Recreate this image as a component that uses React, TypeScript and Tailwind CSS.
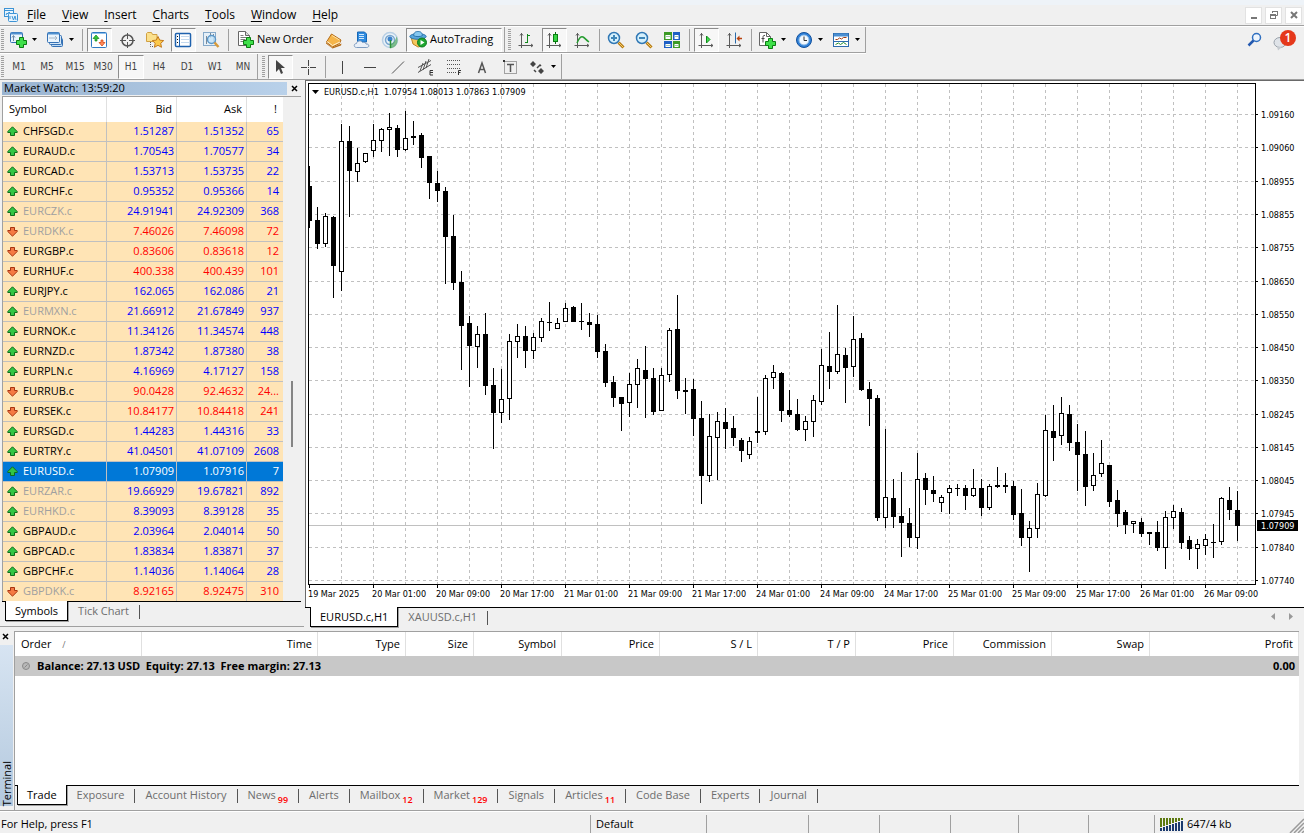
import { useState, type ReactNode } from "react";
import clsx from "clsx";

type Quote = { symbol: string; bid: string; ask: string; spread: string; up: boolean; muted?: boolean };

const q = (symbol: string, bid: string, ask: string, spread: string, up = true, muted = false): Quote => ({
  symbol, bid, ask, spread, up, muted,
});

const quotes: Quote[] = [
  q("CHFSGD.c", "1.51287", "1.51352", "65"),
  q("EURAUD.c", "1.70543", "1.70577", "34"),
  q("EURCAD.c", "1.53713", "1.53735", "22"),
  q("EURCHF.c", "0.95352", "0.95366", "14"),
  q("EURCZK.c", "24.91941", "24.92309", "368", true, true),
  q("EURDKK.c", "7.46026", "7.46098", "72", false, true),
  q("EURGBP.c", "0.83606", "0.83618", "12", false),
  q("EURHUF.c", "400.338", "400.439", "101", false),
  q("EURJPY.c", "162.065", "162.086", "21"),
  q("EURMXN.c", "21.66912", "21.67849", "937", true, true),
  q("EURNOK.c", "11.34126", "11.34574", "448"),
  q("EURNZD.c", "1.87342", "1.87380", "38"),
  q("EURPLN.c", "4.16969", "4.17127", "158"),
  q("EURRUB.c", "90.0428", "92.4632", "24...", false),
  q("EURSEK.c", "10.84177", "10.84418", "241", false),
  q("EURSGD.c", "1.44283", "1.44316", "33"),
  q("EURTRY.c", "41.04501", "41.07109", "2608"),
  q("EURUSD.c", "1.07909", "1.07916", "7"),
  q("EURZAR.c", "19.66929", "19.67821", "892", true, true),
  q("EURHKD.c", "8.39093", "8.39128", "35", true, true),
  q("GBPAUD.c", "2.03964", "2.04014", "50"),
  q("GBPCAD.c", "1.83834", "1.83871", "37"),
  q("GBPCHF.c", "1.14036", "1.14064", "28"),
  q("GBPDKK.c", "8.92165", "8.92475", "310", false, true),
];

// high, body top, body bottom, low, 1 = bearish
const candles: number[][] = [
  [166, 186, 221, 228, 1], [207, 220, 244, 249, 1], [213, 216, 244, 247, 0], [216, 217, 266, 298, 1],
  [124, 141, 272, 291, 0], [126, 141, 171, 217, 1], [148, 163, 172, 182, 0], [153, 153, 162, 163, 0],
  [124, 140, 151, 157, 0], [128, 129, 141, 152, 0], [113, 127, 130, 156, 0], [125, 128, 150, 157, 1],
  [111, 138, 150, 151, 0], [121, 136, 138, 145, 1], [133, 135, 158, 168, 1], [156, 156, 183, 199, 1],
  [171, 183, 191, 202, 1], [187, 191, 237, 284, 1], [215, 236, 283, 290, 1], [271, 282, 326, 370, 1],
  [316, 323, 346, 387, 1], [326, 334, 347, 368, 0], [313, 334, 386, 395, 1], [368, 385, 413, 449, 1],
  [369, 399, 413, 423, 0], [334, 341, 399, 420, 0], [324, 336, 342, 358, 0], [326, 336, 351, 368, 1],
  [333, 337, 351, 359, 0], [318, 321, 338, 342, 0], [302, 322, 323, 331, 1], [318, 323, 329, 329, 0],
  [303, 308, 322, 322, 0], [306, 307, 322, 322, 1], [303, 321, 322, 330, 1], [313, 322, 325, 337, 1],
  [315, 324, 352, 358, 1], [344, 351, 383, 387, 1], [376, 382, 398, 407, 1], [397, 397, 404, 431, 1],
  [373, 384, 403, 417, 0], [359, 368, 385, 408, 0], [346, 370, 379, 418, 1], [368, 378, 412, 415, 1],
  [368, 375, 411, 411, 0], [328, 330, 375, 382, 0], [295, 329, 391, 399, 1], [378, 390, 392, 414, 1],
  [379, 389, 419, 436, 1], [401, 418, 476, 504, 1], [414, 436, 476, 482, 0], [412, 421, 438, 480, 0],
  [408, 422, 429, 449, 1], [416, 428, 438, 446, 1], [438, 440, 451, 462, 1], [437, 441, 455, 459, 0],
  [397, 431, 433, 443, 1], [375, 378, 432, 435, 0], [365, 372, 378, 389, 0], [372, 373, 411, 422, 1],
  [390, 410, 415, 417, 1], [399, 414, 430, 431, 1], [416, 421, 430, 441, 0], [395, 400, 422, 437, 0],
  [349, 365, 402, 405, 0], [332, 366, 372, 389, 1], [305, 354, 372, 374, 0], [348, 355, 368, 403, 1],
  [316, 339, 367, 377, 0], [333, 338, 390, 391, 1], [382, 389, 399, 426, 1], [395, 398, 518, 521, 1],
  [429, 497, 518, 528, 0], [479, 498, 517, 528, 1], [472, 516, 523, 557, 1], [508, 523, 538, 547, 1],
  [453, 479, 538, 549, 0], [473, 478, 490, 505, 1], [476, 490, 494, 502, 1], [495, 497, 503, 512, 0],
  [485, 488, 493, 514, 0], [484, 488, 489, 496, 1], [485, 488, 496, 510, 1], [469, 488, 496, 497, 0],
  [479, 488, 508, 516, 1], [484, 486, 508, 510, 0], [467, 485, 487, 488, 1], [473, 485, 487, 493, 1],
  [481, 486, 515, 520, 1], [489, 513, 538, 546, 1], [521, 528, 538, 572, 0], [483, 494, 529, 538, 0],
  [415, 430, 496, 497, 0], [405, 431, 438, 461, 1], [397, 413, 436, 445, 0], [405, 414, 443, 451, 1],
  [424, 442, 455, 491, 1], [431, 454, 487, 506, 1], [453, 475, 486, 491, 0], [440, 463, 474, 477, 0],
  [465, 465, 502, 507, 1], [490, 500, 514, 527, 1], [510, 512, 525, 534, 1], [521, 521, 524, 533, 0],
  [518, 522, 534, 537, 1], [532, 532, 534, 545, 1], [521, 532, 548, 551, 1], [511, 517, 548, 569, 0],
  [505, 511, 518, 529, 0], [508, 512, 543, 549, 1], [536, 540, 549, 560, 1], [539, 544, 549, 569, 0],
  [534, 539, 546, 555, 0], [524, 542, 543, 558, 1], [497, 498, 542, 545, 0], [487, 500, 510, 520, 1],
  [491, 510, 526, 541, 1],
];

const PLOT_TOP = 84;

const prices: [string, number][] = [
  ["1.09160", 114], ["1.09060", 147], ["1.08955", 181], ["1.08855", 214], ["1.08755", 247],
  ["1.08650", 281], ["1.08550", 314], ["1.08450", 347], ["1.08350", 380], ["1.08245", 414],
  ["1.08145", 447], ["1.08045", 480], ["1.07945", 513], ["1.07840", 547], ["1.07740", 580],
];

const times = [
  "19 Mar 2025", "20 Mar 01:00", "20 Mar 09:00", "20 Mar 17:00", "21 Mar 01:00", "21 Mar 09:00",
  "21 Mar 17:00", "24 Mar 01:00", "24 Mar 09:00", "24 Mar 17:00", "25 Mar 01:00", "25 Mar 09:00",
  "25 Mar 17:00", "26 Mar 01:00", "26 Mar 09:00",
];

const terminalTabs: { name: string; count?: string }[] = [
  { name: "Trade" }, { name: "Exposure" }, { name: "Account History" }, { name: "News", count: "99" },
  { name: "Alerts" }, { name: "Mailbox", count: "12" }, { name: "Market", count: "129" },
  { name: "Signals" }, { name: "Articles", count: "11" }, { name: "Code Base" }, { name: "Experts" },
  { name: "Journal" },
];

const orderColumns: [string, string][] = [
  ["Time", "w-[176px]"], ["Type", "w-[88px]"], ["Size", "w-[68px]"], ["Symbol", "w-[88px]"],
  ["Price", "w-[98px]"], ["S / L", "w-[98px]"], ["T / P", "w-[98px]"], ["Price", "w-[98px]"],
  ["Commission", "w-[98px]"], ["Swap", "w-[98px]"], ["Profit", ""],
];

/* ── Icons ── */

function Svg({ children, size = 18 }: { children: ReactNode; size?: number }) {
  return (
    <svg width={size} height={size} viewBox={`0 0 ${size} ${size}`} fill="none" className="shrink-0" aria-hidden="true">
      {children}
    </svg>
  );
}

const Plus = ({ x, y }: { x: number; y: number }) => (
  <path
    transform={`translate(${x} ${y})`}
    d="M3.5.5h4v3h3v4h-3v3h-4v-3h-3v-4h3z"
    fill="#3fe04a"
    stroke="#0b7d12"
  />
);

const AppIcon = () => (
  <Svg size={16}>
    <rect x="1.5" y="1.5" width="9" height="8" fill="#e8f4fd" stroke="#3d94d6" />
    <path d="M2 3.5h8" stroke="#3d94d6" />
    <path d="M3 8l1-2 1 1 1-2 2 2" stroke="#3d94d6" />
    <rect x="5.5" y="6.5" width="9" height="8" rx="1" fill="#e8f4fd" stroke="#3d94d6" />
    <path d="M7 12v-3M9 9l1.5 4L12 9l1 4" stroke="#3d94d6" />
  </Svg>
);

const NewChartIcon = () => (
  <Svg>
    <rect x="1.5" y="1.5" width="12" height="10" rx="1" fill="#e9f4fd" stroke="#3471b5" />
    <path d="M2 2.5h11" stroke="#4f90cf" strokeWidth="2" />
    <path d="M4.5 10V5M3 6.5l1.5-2 1.5 2" stroke="#6f8aa5" />
    <Plus x={7} y={6} />
  </Svg>
);

const ProfilesIcon = () => (
  <Svg>
    <rect x="5.5" y="7.5" width="11" height="8" rx="1" fill="#bfdaf2" stroke="#3471b5" />
    <rect x="3.5" y="4.5" width="12" height="9" rx="1" fill="#d4e7f7" stroke="#3471b5" />
    <rect x="1.5" y="1.5" width="12" height="10" rx="1" fill="#e9f4fd" stroke="#3471b5" />
    <path d="M2 2.5h11" stroke="#4f90cf" strokeWidth="2" />
    <path d="M3 7h8M9 5l2 2-2 2" stroke="#a5b6c6" />
  </Svg>
);

const MarketWatchIcon = () => (
  <Svg>
    <rect x="1.5" y="1.5" width="15" height="15" rx="1" fill="#fff" stroke="#2f79c3" />
    <path d="M2 2.5h14" stroke="#8fc0ec" />
    <path d="M6 4l3 3.5H7V10H5V7.5H3z" fill="#35c63c" stroke="#15861b" strokeWidth=".7" />
    <path d="M12 15l3-3.500h-2V9h-2v2.500H9z" fill="#ff8c5c" stroke="#d03c0c" strokeWidth=".7" />
  </Svg>
);

const CrosshairIcon = () => (
  <Svg>
    <circle cx="9.5" cy="9.5" r="5.5" stroke="#555" strokeWidth="1.5" />
    <path d="M9.5 2v6M9.5 11v6M2 9.5h6M11 9.5h6" stroke="#555" />
  </Svg>
);

const NavigatorIcon = () => (
  <Svg>
    <path d="M.5 2.5l1-1h4l1 2H11v7H.5z" fill="#fbe08c" stroke="#d0a043" />
    <path d="M4.5 11v4.5h3" stroke="#555" strokeDasharray="1 1" />
    <path d="M12 5.5l1.7 3.6 4 .5-3 2.7.8 4-3.5-2-3.6 2 .8-4-2.900-2.700 4-.5z" fill="#fcc94b" stroke="#c47a1c" />
  </Svg>
);

const TerminalIcon = () => (
  <Svg>
    <rect x="1.5" y="2.5" width="15" height="13" rx="1" fill="#fff" stroke="#1f62ae" strokeWidth="1.5" />
    <path d="M5.5 3v12" stroke="#1f62ae" />
    <path d="M3 5.5h1M3 8.5h1M3 11.5h1" stroke="#111" />
    <path d="M7 5.5h8M7 8.5h8M7 11.5h8" stroke="#c4d9ee" />
  </Svg>
);

const TesterIcon = () => (
  <Svg>
    <rect x="1.5" y="1.5" width="12" height="13" fill="#e6f0f8" stroke="#86a9c9" />
    <path d="M4.5 13V5M6 8.5H4M11.5 3v8M8.5 2v5" stroke="#7b8b99" />
    <circle cx="9.5" cy="8.5" r="4" fill="#c5e4f8" fillOpacity=".85" stroke="#5b97c9" strokeWidth="1.5" />
    <path d="M12.5 11.5l4 4.5" stroke="#d79a3b" strokeWidth="2.5" />
  </Svg>
);

const NewOrderIcon = () => (
  <Svg>
    <path d="M2.5 1.5h7l4 4v10h-11z" fill="#fff" stroke="#666" />
    <path d="M9.5 1.5v4h4" fill="#ddd" stroke="#666" />
    <path d="M4.5 5.5h3M4.5 7.5h6M4.5 9.5h5M4.5 11.5h4" stroke="#7b7b7b" />
    <Plus x={7} y={7} />
  </Svg>
);

const MetaEditorIcon = () => (
  <Svg>
    <path d="M1 11l6 5.500 9.500-4-.5 2L7.500 17.500 1 12.500z" fill="#b56b16" />
    <path d="M6.5 3L16 9l-1.500 3.500L7.500 16l-6-5z" fill="#f5b54a" stroke="#b56b16" />
    <path d="M7 4.500L14.500 9" stroke="#fde3a7" />
    <path d="M2 10.500l5.500 4L15 11" stroke="#fff3d6" />
  </Svg>
);

const VpsIcon = () => (
  <Svg>
    <path d="M4.5 1h7l2 2v8h-9z" fill="#2e8be0" stroke="#1667b5" />
    <path d="M6 3.5h5M6 5.5h5M6 7.5h5" stroke="#cfe7fb" />
    <path d="M3.5 16.5c-3 0-3-4 0-4 .3-3 5-3.5 6-1 2-.8 3.500.5 3.500 1.500 3.500-.5 3.700 3.500.8 3.500z" fill="#eaf0f8" stroke="#7f9cc0" />
  </Svg>
);

const SignalsIcon = () => (
  <Svg>
    <circle cx="9" cy="9" r="7.500" fill="#eaf2f8" stroke="#b8cfe4" strokeWidth="1.5" />
    <circle cx="9" cy="9" r="4.500" stroke="#7aa6cf" strokeWidth="1.5" />
    <path d="M9 17.500a8 8 0 0 0 6.500-12c-1 4-3 6.500-6.500 8z" fill="#55a95f" opacity=".7" />
    <circle cx="9" cy="8" r="2.500" fill="#3b82cc" />
    <path d="M9.500 9v8" stroke="#2c9338" strokeWidth="1.5" />
  </Svg>
);

const AutoTradingIcon = () => (
  <Svg>
    <path d="M2 7l2 7 5 3 4-1 3-9z" fill="#f4c65c" stroke="#bb8423" />
    <ellipse cx="9" cy="6.500" rx="8.200" ry="2.800" fill="#58a6dc" stroke="#2b75ac" />
    <path d="M4.500 5.500C5 2 7 1.500 9 1.500s4 .5 4.500 4c-2 1.500-7 1.500-9 0z" fill="#86c8f0" stroke="#2b75ac" />
    <circle cx="13" cy="12.500" r="4.500" fill="#1fa630" stroke="#0d7a1d" />
    <path d="M11.500 10v5l4-2.500z" fill="#fff" />
  </Svg>
);

const Axes = () => (
  <path d="M4.5 2v15M1.5 14.500H16M3 4.500l1.500-2L6 4.500M14 13l2 1.500-2 1.500" stroke="#5a5a5a" />
);

const BarChartIcon = () => (
  <Svg><Axes /><path d="M10.500 3v9M8 11.500h2.500M10.500 4.500H13" stroke="#11871b" /></Svg>
);
const CandleIcon = () => (
  <Svg><Axes /><path d="M10.500 1v12" stroke="#0b6d13" /><rect x="8.500" y="3.500" width="4" height="7" fill="#36d443" stroke="#0b7d12" /></Svg>
);
const LineChartIcon = () => (
  <Svg><Axes /><path d="M4 12c2-5 4-7 6-6s3 3 6 5" stroke="#259c2f" strokeWidth="1.5" /></Svg>
);

const ZoomIcon = ({ plus = false }: { plus?: boolean }) => (
  <Svg>
    <path d="M11.5 11.5l5 5" stroke="#b57a15" strokeWidth="3" />
    <path d="M11.5 11.5l5 5" stroke="#f6d067" />
    <circle cx="7" cy="7" r="5.500" fill="#d5f0fc" stroke="#3178b5" strokeWidth="1.5" />
    <path d={plus ? "M4 7h6M7 4v6" : "M4 7h6"} stroke="#3f86b8" strokeWidth="2" />
  </Svg>
);

const TileIcon = () => (
  <Svg>
    <path d="M1 1h8v8H1zM10 10h7v7h-7z" fill="#3c9a26" />
    <path d="M10 1h7v8h-7zM1 10h8v7H1z" fill="#1d5fc4" />
    <path d="M2.5 4h5v4h-5zM11.5 13h4v3h-4zM11.5 4h4v4h-4zM2.5 13h5v3h-5z" fill="#fff" />
    <path d="M3 5.5h4M12 5.5h3M3 14.5h4M12 14.5h3" stroke="#9fc4a8" />
  </Svg>
);

const AutoScrollIcon = () => (
  <Svg><Axes /><path d="M9.500 5v7l3.500-3.500z" fill="#3ee04a" stroke="#0f8a1a" /></Svg>
);
const ShiftIcon = () => (
  <Svg>
    <Axes />
    <path d="M10.500 1.500v11" stroke="#2a6aa8" />
    <path d="M17 7.500h-3" stroke="#b8420f" strokeWidth="1.5" />
    <path d="M11.500 7.500l3-3v6z" fill="#b8420f" />
  </Svg>
);

const IndicatorsIcon = () => (
  <Svg>
    <path d="M1.5 1.5h7l4 4v9h-11z" fill="#fff" stroke="#666" />
    <path d="M8.5 1.5v4h4" stroke="#666" />
    <path d="M7 4.5c-1.500-.5-2 .5-2 2v5M3.5 7.5h3" stroke="#444" />
    <Plus x={7} y={7} />
  </Svg>
);

const PeriodsIcon = () => (
  <Svg>
    <circle cx="9" cy="9" r="7.500" fill="#2e80d8" stroke="#12509c" />
    <circle cx="9" cy="9" r="5" fill="#f2f8fd" stroke="#8ebbe6" />
    <path d="M9 5.5v4h3" stroke="#333" />
  </Svg>
);

const TemplatesIcon = () => (
  <Svg>
    <rect x="1.5" y="2.5" width="15" height="13" fill="#fff" stroke="#2d6cae" />
    <path d="M2 4h14" stroke="#4a8fd2" strokeWidth="3" />
    <path d="M2 10.5h14" stroke="#2d6cae" />
    <path d="M3.5 8.5h2l2-1.500 2 1 2-1.500h3" stroke="#a33c10" />
    <path d="M3.5 13.5l3-1.500 2 1.500 3-2 3 2" stroke="#239031" />
  </Svg>
);

const SearchIcon = () => (
  <Svg size={16}>
    <circle cx="9.5" cy="5.5" r="4" fill="#eef5fd" stroke="#2f6fc0" strokeWidth="1.5" />
    <path d="M6.5 8.5l-5 5" stroke="#2459b0" strokeWidth="2.5" />
  </Svg>
);

const Arrow = ({ up }: { up: boolean }) => (
  <svg width="11" height="11" viewBox="0 0 11 11" className={clsx("shrink-0 mt-[2px]", !up && "rotate-180")} aria-hidden="true">
    <path
      d="M5.5.8L10.2 5.500V6.500H7.500V9.500H3.500V6.500H.8V5.500z"
      fill={up ? "#32c544" : "#f47a45"}
      stroke={up ? "#0f6c1c" : "#a83510"}
    />
  </svg>
);

const Caret = () => (
  <svg width="5" height="3" viewBox="0 0 5 3" className="shrink-0" aria-hidden="true">
    <path d="M0 0h5L2.5 3z" fill="#000" />
  </svg>
);

const CloseGlyph = () => (
  <svg width="7" height="7" viewBox="0 0 7 7" aria-hidden="true">
    <path d="M1 1l5 5M6 1L1 6" stroke="#000" strokeWidth="1.5" />
  </svg>
);

/* ── Toolbars ── */

const pressedStyle = "border border-t-[#8c8c8c] border-l-[#8c8c8c] border-r-white border-b-white bg-[#f7f7f7]";

const Grip = () => (
  <span className="h-[22px] w-[3px] mx-px shrink-0 bg-[repeating-linear-gradient(to_bottom,#a0a0a0_0_1px,#f0f0f0_1px_2px)]" />
);

const Divider = () => (
  <span className="w-[6px] shrink-0 flex justify-center">
    <span className="h-[22px] w-px bg-[#a0a0a0]" />
  </span>
);

function Tool({ label, pressed, children }: { label: string; pressed?: boolean; children: ReactNode }) {
  return (
    <button aria-label={label} className="w-7 h-[25px] shrink-0 flex items-center justify-center">
      <span className={clsx("w-[25px] h-[24px] flex items-center justify-center", pressed && pressedStyle)}>
        {children}
      </span>
    </button>
  );
}

function DropTool({ label, children }: { label: string; children: ReactNode }) {
  return (
    <button aria-label={label} className="w-[37px] h-[25px] shrink-0 flex items-center pl-1 gap-[5px]">
      {children}
      <Caret />
    </button>
  );
}

function MainToolbar() {
  return (
    <div className="flex justify-between">
      <div className="flex h-[26px] border-b border-[#a0a0a0] shadow-[0_1px_0_white]">
        <div className="flex items-center border-r border-[#a0a0a0]">
          <Grip />
          <DropTool label="New Chart"><NewChartIcon /></DropTool>
          <DropTool label="Profiles"><ProfilesIcon /></DropTool>
          <Divider />
          <Tool label="Market Watch" pressed><MarketWatchIcon /></Tool>
          <Tool label="Data Window"><CrosshairIcon /></Tool>
          <Tool label="Navigator"><NavigatorIcon /></Tool>
          <Tool label="Terminal" pressed><TerminalIcon /></Tool>
          <Tool label="Strategy Tester"><TesterIcon /></Tool>
          <Divider />
          <button className="h-[25px] w-[89px] pl-[5px] pb-[2px] flex items-center gap-[3px] whitespace-nowrap">
            <NewOrderIcon />
            New Order
          </button>
          <Tool label="MetaEditor"><MetaEditorIcon /></Tool>
          <Tool label="Virtual Hosting"><VpsIcon /></Tool>
          <Tool label="Signals"><SignalsIcon /></Tool>
          <button className={clsx("h-[24px] w-[96px] mx-[2px] pl-[2px] pb-[2px] flex items-center gap-[3px] whitespace-nowrap", pressedStyle)}>
            <AutoTradingIcon />
            AutoTrading
          </button>
        </div>
        <div className="flex items-center pl-[2px] border-r border-[#a0a0a0]">
          <Grip />
          <Tool label="Bar Chart"><BarChartIcon /></Tool>
          <Tool label="Candlesticks" pressed><CandleIcon /></Tool>
          <Tool label="Line Chart"><LineChartIcon /></Tool>
          <Divider />
          <Tool label="Zoom In"><ZoomIcon plus /></Tool>
          <Tool label="Zoom Out"><ZoomIcon /></Tool>
          <Tool label="Tile Windows"><TileIcon /></Tool>
          <Divider />
          <Tool label="Auto Scroll" pressed><AutoScrollIcon /></Tool>
          <Tool label="Chart Shift"><ShiftIcon /></Tool>
          <Divider />
          <DropTool label="Indicators"><IndicatorsIcon /></DropTool>
          <DropTool label="Periods"><PeriodsIcon /></DropTool>
          <DropTool label="Templates"><TemplatesIcon /></DropTool>
        </div>
      </div>
      <div className="flex items-center gap-[10px] pr-[7px]">
        <button aria-label="Search"><SearchIcon /></button>
        <button aria-label="Notifications">
          <svg width="24" height="22" viewBox="0 0 24 22" aria-hidden="true">
            <ellipse cx="7" cy="13.500" rx="6" ry="5" fill="#dfe3e8" stroke="#9aa2ab" />
            <path d="M4 17.500l1 4 4-3.500z" fill="#c5cad0" />
            <circle cx="15" cy="9" r="8" fill="#e5381b" />
            <text x="15" y="13" textAnchor="middle" className="font-['Open_Sans'] text-[12px] font-semibold" fill="#fff">1</text>
          </svg>
        </button>
      </div>
    </div>
  );
}

const frames = ["M1", "M5", "M15", "M30", "H1", "H4", "D1", "W1", "MN"];

function DrawingToolbar() {
  const [frame, setFrame] = useState("H1");
  return (
    <div className="flex h-[26px] mt-px border-b border-[#a0a0a0]">
      <div className="flex items-center border-r border-[#a0a0a0]">
        <Grip />
        {frames.map((f) => (
          <button
            key={f}
            onClick={() => setFrame(f)}
            className={clsx(
              "w-[26px] h-[24px] mx-px text-[10px] text-[#444] font-['DejaVu_Sans_Condensed','DejaVu_Sans',sans-serif]",
              f === frame && pressedStyle,
            )}
          >
            {f}
          </button>
        ))}
      </div>
      <div className="flex items-center pl-[3px] border-r border-[#a0a0a0]">
        <Grip />
        <Tool label="Cursor" pressed>
          <Svg><path d="M5 2v12l3-3 2 5 2-1-2-5h4z" fill="#444" /></Svg>
        </Tool>
        <Tool label="Crosshair">
          <Svg><path d="M9.5 2v6M9.5 11v6M2 9.500h6M11 9.500h6M9 9.500h1" stroke="#444" /></Svg>
        </Tool>
        <Divider />
        <Tool label="Vertical Line"><Svg><path d="M9.5 3v13" stroke="#444" /></Svg></Tool>
        <Tool label="Horizontal Line"><Svg><path d="M3 9.5h12" stroke="#444" /></Svg></Tool>
        <Tool label="Trendline"><Svg><path d="M3 15.5l12-12" stroke="#555" /></Svg></Tool>
        <Tool label="Equidistant Channel">
          <Svg>
            <path d="M1 9.5l13-7M1 14.5l13-8M3 13l3-8M6 12l3-9M9 10l3-9" stroke="#555" />
            <path d="M16 12.500h-3v4.500h3M13 14.500h3" stroke="#333" />
          </Svg>
        </Tool>
        <Tool label="Fibonacci Retracement">
          <Svg>
            <path d="M2 2.5h14M2 6.5h14M2 10.5h14M2 14.5h9" stroke="#555" strokeDasharray="1 1" />
            <path d="M16 12.5h-2.500V17M13.500 14.5h2" stroke="#333" />
          </Svg>
        </Tool>
        <Tool label="Text">
          <Svg><path d="M5.5 15L9 5l3.500 10M6.500 11.500h5" stroke="#555" strokeWidth="1.5" /></Svg>
        </Tool>
        <Tool label="Text Label">
          <Svg>
            <rect x="3.500" y="3.500" width="12" height="12" stroke="#555" strokeDasharray="1 1" />
            <path d="M2 2h2v2H2z" fill="#333" />
            <path d="M6 6.500h7M9.500 6v8" stroke="#555" strokeWidth="1.5" />
          </Svg>
        </Tool>
        <DropTool label="Arrows">
          <Svg>
            <path d="M5 3l3 3-3 3-3-3zM13 10l3 3-3 3-3-3z" fill="#444" />
            <path d="M6 12l2 2M9 10l3-3 1 1" stroke="#444" strokeWidth="1.5" />
          </Svg>
        </DropTool>
      </div>
    </div>
  );
}

const menus = ["File", "View", "Insert", "Charts", "Tools", "Window", "Help"];

function MenuBar() {
  return (
    <div className="flex items-center justify-between h-[26px] border-t-5 border-t-[#eef3f8] border-b border-b-[#a0a0a0] pr-[2px]">
      <nav className="flex items-center text-[12px]">
        <span className="pl-[3px]"><AppIcon /></span>
        {menus.map((m) => (
          <button key={m} className="px-[8px]">
            <span className="underline underline-offset-2">{m[0]}</span>
            {m.slice(1)}
          </button>
        ))}
      </nav>
      <div className="flex gap-[3px]">
        <button aria-label="Minimize" className="size-[17px] bg-white border border-[#e2e2e2] flex items-center justify-center">
          <svg width="10" height="10" aria-hidden="true"><path d="M2 8h6" stroke="#777" strokeWidth="2" /></svg>
        </button>
        <button aria-label="Restore" className="size-[17px] bg-white border border-[#e2e2e2] flex items-center justify-center">
          <svg width="10" height="10" fill="none" aria-hidden="true">
            <path d="M3.5 3V1.5h5v4h-2M3 1.5h6" stroke="#777" />
            <rect x="1.5" y="4.5" width="5" height="4" stroke="#777" />
            <path d="M1 5h6" stroke="#777" strokeWidth="2" />
          </svg>
        </button>
        <button aria-label="Close" className="size-[17px] bg-white border border-[#e2e2e2] flex items-center justify-center">
          <svg width="10" height="10" aria-hidden="true"><path d="M2 2l6 6M8 2L2 8" stroke="#777" strokeWidth="2" /></svg>
        </button>
      </div>
    </div>
  );
}

/* ── Tabs shared by the panels ── */

function Tab({ active, onClick, children }: { active: boolean; onClick: () => void; children: ReactNode }) {
  if (active) {
    return (
      <button
        onClick={onClick}
        className="-mt-px h-[20px] px-[9px] bg-white text-black border-x border-b border-black shadow-[1px_1px_0_#a0a0a0] whitespace-nowrap"
      >
        {children}
      </button>
    );
  }
  return (
    <button onClick={onClick} className="h-[20px] flex items-center text-[#6d6d6d] whitespace-nowrap">
      <span className="px-[10px] pb-[2px] flex items-center">{children}</span>
      <span className="h-[14px] w-px bg-[#555]" />
    </button>
  );
}

/* ── Market watch ── */

function MarketWatch() {
  const [selected, setSelected] = useState("EURUSD.c");
  const [tab, setTab] = useState("Symbols");
  return (
    <aside className="w-[304px] shrink-0 flex flex-col pt-[2px] pl-[2px] pr-[3px] border-b border-[#a0a0a0]">
      <div className="h-[13px] mb-px flex items-center shrink-0">
        <h2 className="flex-1 h-full leading-[12px] pl-[2px] bg-linear-to-r from-[#99b4d1] to-[#b9d1ea]">
          Market Watch: 13:59:20
        </h2>
        <button aria-label="Close Market Watch" className="w-[14px] flex justify-center"><CloseGlyph /></button>
      </div>
      <div className="flex flex-1 min-h-0 overflow-hidden border-t border-l border-[#a0a0a0]">
        <table className="w-[280px] shrink-0 table-fixed border-separate border-spacing-0">
          <thead>
            <tr className="h-[25px] bg-white">
              <th className="w-[104px] pt-0 pb-[2px] font-normal text-left pl-[6px] border-r border-[#e0e0e0]">Symbol</th>
              <th className="w-[70px] pt-0 pb-[2px] font-normal text-right pr-1 border-r border-[#e0e0e0]">Bid</th>
              <th className="w-[70px] pt-0 pb-[2px] font-normal text-right pr-1 border-r border-[#e0e0e0]">Ask</th>
              <th className="pt-0 pb-[2px] font-normal text-right pr-[6px]">!</th>
            </tr>
          </thead>
          <tbody>
            {quotes.map((row) => {
              const on = row.symbol === selected;
              const cell = clsx(
                "pt-0 pb-[2px] text-right border-b border-[#c0c0c0]",
                on ? "text-white" : row.up ? "text-[#0000ff]" : "text-[#ff0000]",
              );
              return (
                <tr
                  key={row.symbol}
                  onClick={() => setSelected(row.symbol)}
                  className={clsx("h-5", on ? "bg-[#0078d7]" : "bg-[#ffe4b5]")}
                >
                  <td className="p-0 pb-[2px] border-b border-r border-[#c0c0c0]">
                    <span className={clsx("flex items-center gap-[5px] pl-1", on ? "text-white" : row.muted ? "text-[#a0a0a0]" : "text-black")}>
                      <Arrow up={row.up} />
                      {row.symbol}
                    </span>
                  </td>
                  <td className={clsx(cell, "pr-[2px] border-r")}>{row.bid}</td>
                  <td className={clsx(cell, "pr-[2px] border-r")}>{row.ask}</td>
                  <td className={clsx(cell, "pr-1")}>{row.spread}</td>
                </tr>
              );
            })}
          </tbody>
        </table>
        <div className="flex-1 pl-2 pt-[284px]">
          <div className="w-[2px] h-[66px] bg-[#858585]" />
        </div>
      </div>
      <div className="h-[25px] shrink-0 flex items-start pl-[3px] border-t border-black">
        {["Symbols", "Tick Chart"].map((t) => (
          <Tab key={t} active={t === tab} onClick={() => setTab(t)}>{t}</Tab>
        ))}
      </div>
    </aside>
  );
}

/* ── Chart ── */

function Chart() {
  return (
    <div className="flex-1 min-h-0 flex flex-col bg-white border-l border-t border-[#696969] pl-[2px] pt-[2px] text-[9px] font-['DejaVu_Sans_Condensed','DejaVu_Sans',sans-serif]">
      <div className="flex flex-1 min-h-0">
        <div className="flex-1 relative border border-black overflow-hidden">
          <svg className="block w-full h-full" shapeRendering="crispEdges" aria-label="EURUSD.c H1 candlestick chart">
            {prices.map(([p, y]) => (
              <line key={p} x1="0" x2="100%" y1={y - PLOT_TOP + 0.5} y2={y - PLOT_TOP + 0.5} stroke="#c0c0c0" strokeDasharray="3 3" />
            ))}
            {Array.from({ length: 29 }, (_, i) => (
              <line key={i} x1={32.5 + i * 32} x2={32.5 + i * 32} y1="0" y2="100%" stroke="#c0c0c0" strokeDasharray="3 3" />
            ))}
            <line x1="0" x2="100%" y1="441.5" y2="441.5" stroke="#c0c0c0" />
            {candles.map(([high, top, bottom, low, bear], i) => (
              <g key={i}>
                <rect x={i * 8} y={high - PLOT_TOP} width="1" height={low - high} />
                <rect x={i * 8 - 2} y={top - PLOT_TOP} width="5" height={bottom - top} />
                {!bear && (
                  <rect x={i * 8 - 1} y={top - PLOT_TOP + 1} width="3" height={bottom - top - 2} fill="#fff" />
                )}
              </g>
            ))}
          </svg>
          <p className="absolute left-[3px] top-[2px] flex items-center gap-[5px] whitespace-pre leading-[12px]">
            <svg width="7" height="4" aria-hidden="true"><path d="M0 0h7L3.5 4z" /></svg>
            {"EURUSD.c,H1  1.07954 1.08013 1.07863 1.07909"}
          </p>
        </div>
        <svg className="w-[48px] h-full shrink-0" shapeRendering="crispEdges" aria-label="Price scale">
          {prices.map(([p, y]) => (
            <g key={p}>
              <rect x="0" y={y - PLOT_TOP + 1} width="2" height="1" />
              <text x="5" y={y - PLOT_TOP + 5}>{p}</text>
            </g>
          ))}
          <rect x="1" y="437" width="41" height="11" />
          <text x="5" y="446" fill="#fff">1.07909</text>
        </svg>
      </div>
      <svg className="w-full h-[22px] shrink-0" shapeRendering="crispEdges" aria-label="Time scale">
        {times.map((t, i) => (
          <g key={t}>
            <rect x={1 + i * 64} y="0" width="1" height="3" />
            <text x={i * 64} y="12">{t}</text>
          </g>
        ))}
      </svg>
    </div>
  );
}

function ChartArea() {
  const [tab, setTab] = useState("EURUSD.c,H1");
  return (
    <main className="flex-1 min-w-0 flex flex-col pl-px">
      <Chart />
      <div className="h-[20px] shrink-0 flex items-start justify-between pl-[5px] border-t border-black">
        <div className="flex items-start">
          {["EURUSD.c,H1", "XAUUSD.c,H1"].map((t) => (
            <Tab key={t} active={t === tab} onClick={() => setTab(t)}>{t}</Tab>
          ))}
        </div>
        <div className="flex gap-[14px] pt-[5px] pr-[11px]">
          <button aria-label="Scroll left"><svg width="4" height="7" aria-hidden="true"><path d="M4 0v7L0 3.5z" fill="#999" /></svg></button>
          <button aria-label="Scroll right"><svg width="4" height="7" aria-hidden="true"><path d="M0 0v7l4-3.5z" fill="#999" /></svg></button>
        </div>
      </div>
    </main>
  );
}

/* ── Terminal ── */

function Terminal() {
  const [tab, setTab] = useState("Trade");
  return (
    <section className="h-[183px] shrink-0 flex pt-[4px] pr-[5px]">
      <div className="w-[14px] shrink-0 flex flex-col pb-1">
        <button aria-label="Close Terminal" className="h-[14px] pl-[2px] pt-[2px] flex items-start"><CloseGlyph /></button>
        <div className="flex-1 w-[13px] bg-linear-to-t from-[#b4c9de] to-[#d7e4f2] flex items-center justify-center">
          <h2 className="[writing-mode:vertical-rl] rotate-180 self-end leading-[13px]">Terminal</h2>
        </div>
      </div>
      <div className="flex-1 min-w-0 flex flex-col border-l border-t border-[#a0a0a0]">
        <div className="flex-1 min-h-0 bg-white">
          <table className="w-full table-fixed border-separate border-spacing-0">
            <thead>
              <tr className="h-[24px]">
                <th className="w-[127px] p-0 pl-[6px] font-normal text-left border-r border-[#e0e0e0]">
                  Order <span className="pl-[8px] text-[9px] text-[#777]">/</span>
                </th>
                {orderColumns.map(([name, width], i) => (
                  <th key={i} className={clsx("p-0 pr-[5px] font-normal text-right border-r border-[#e0e0e0]", width)}>
                    {name}
                  </th>
                ))}
              </tr>
            </thead>
            <tbody>
              <tr className="h-5 bg-[#c8c8c8] font-bold">
                <td colSpan={11} className="p-0 pl-[7px]">
                  <span className="flex items-center gap-[7px] whitespace-pre">
                    <svg width="8" height="8" fill="none" aria-hidden="true">
                      <circle cx="4" cy="4" r="3.5" fill="#b8b8b8" stroke="#888" />
                      <path d="M2.5 5.5l3-3" stroke="#888" />
                    </svg>
                    {"Balance: 27.13 USD  Equity: 27.13  Free margin: 27.13"}
                  </span>
                </td>
                <td className="p-0 pr-1 text-right">0.00</td>
              </tr>
            </tbody>
          </table>
        </div>
        <div className="h-[25px] shrink-0 flex items-start pl-[2px] border-t border-black">
          {terminalTabs.map(({ name, count }) => (
            <Tab key={name} active={name === tab} onClick={() => setTab(name)}>
              {name}
              {count && <span className="pl-[2px] pt-2 -mb-px text-[9px] leading-[12px] font-semibold text-[#ff0000]">{count}</span>}
            </Tab>
          ))}
        </div>
      </div>
    </section>
  );
}

/* ── Status bar ── */

function StatusBar() {
  const cell = "border-l border-[#a0a0a0] h-[18px] shrink-0 flex items-center";
  return (
    <footer className="h-[23px] shrink-0 flex items-end border-t border-[#a0a0a0] shadow-[inset_0_1px_0_white]">
      <span className="flex-1 pl-px h-[18px] flex items-center">For Help, press F1</span>
      <span className={clsx(cell, "w-[116px] pl-[5px]")}>Default</span>
      <span className={clsx(cell, "w-[102px]")} />
      <span className={clsx(cell, "w-[71px]")} />
      <span className={clsx(cell, "w-[71px]")} />
      <span className={clsx(cell, "w-[68px]")} />
      <span className={clsx(cell, "w-[70px]")} />
      <span className={clsx(cell, "w-[66px]")} />
      <span className={clsx(cell, "w-[150px] pl-[5px] justify-between")}>
        <span className="flex items-center gap-1">
          <svg width="23" height="13" shapeRendering="crispEdges" aria-hidden="true">
            {[10, 9, 8, 7, 6, 5, 4, 3].map((y, i) => (
              <g key={i}>
                <rect x={i * 3} y="0" width="2" height={y - 1} fill="#5d7a10" />
                <rect x={i * 3} y={y} width="2" height={13 - y} fill="#1b3a6e" />
              </g>
            ))}
          </svg>
          647/4 kb
        </span>
        <svg width="15" height="15" className="self-end" aria-hidden="true">
          <path d="M1 15L15 1M5 15L15 5M9 15l6-6M13 15l2-2" stroke="#9a9a9a" strokeWidth="1.5" />
        </svg>
      </span>
    </footer>
  );
}

export default function App() {
  return (
    <div className="h-screen flex flex-col overflow-hidden bg-[#f0f0f0] text-black text-[11px] leading-[16px] font-['Open_Sans','Noto_Sans',sans-serif]">
      <header className="shrink-0">
        <MenuBar />
        <div className="border-t border-white">
          <MainToolbar />
        </div>
        <DrawingToolbar />
      </header>
      <div className="flex flex-1 min-h-0">
        <MarketWatch />
        <ChartArea />
      </div>
      <Terminal />
      <StatusBar />
    </div>
  );
}
